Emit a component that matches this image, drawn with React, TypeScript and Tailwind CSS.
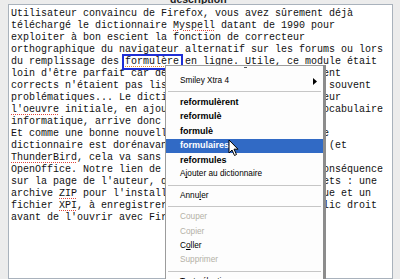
import React from "react";

type Seg = string | { t: string; err?: "red" | "orange" };

const lines: Seg[][] = [
  ["Utilisateur convaincu de Firefox, vous avez sûrement déjà"],
  ["téléchargé le dictionnaire ", { t: "Myspell", err: "red" }, " datant de 1990 pour"],
  ["exploiter à bon escient la fonction de correcteur"],
  ["orthographique du navigateur alternatif sur les forums ou lors"],
  ["du remplissage des ", { t: "formulère", err: "orange" }, " en ligne. Utile, ce module était"],
  ["loin d'être parfait car de nombreux termes parfaitement"],
  ["corrects n'étaient pas listés, rendant ses résultats souvent"],
  ["problématiques... Le dictionnaire, repensé par l'auteur"],
  [{ t: "l'oeuvre", err: "red" }, " initiale, en ajoutant des termes issus du vocabulaire"],
  ["informatique, arrive donc à point nommé."],
  ["Et comme une bonne nouvelle n'arrive jamais seule, ce"],
  ["dictionnaire est dorénavant compatible avec Netscape (et"],
  [{ t: "ThunderBird", err: "red" }, ", cela va sans dire, ainsi qu'avec"],
  ["OpenOffice. Notre lien de téléchargement pointe en conséquence"],
  ["sur la page de l'auteur, qui propose ainsi deux paquets : une"],
  ["archive ", { t: "ZIP", err: "red" }, " pour l'installation de manière automatique et un"],
  ["fichier ", { t: "XPI", err: "red" }, ", à enregistrer sur votre disque via un clic droit"],
  ["avant de l'ouvrir avec Firefox."],
];

function Line({ segs }: { segs: Seg[] }) {
  return (
    <div className="h-[12px] whitespace-pre">
      {segs.map((s, i) =>
        typeof s === "string" ? (
          <span key={i}>{s}</span>
        ) : (
          <span
            key={i}
            className={
              s.err === "orange"
                ? "underline decoration-dotted decoration-1 decoration-[#e8872a] underline-offset-[2px]"
                : "underline decoration-dotted decoration-1 decoration-[#e0463c] underline-offset-[2px]"
            }
          >
            {s.t}
          </span>
        )
      )}
    </div>
  );
}

function Sep() {
  return (
    <div className="flex h-[7px] items-center px-[2px]">
      <div className="h-px w-full bg-[#c6c6c6]" />
    </div>
  );
}

function Item({
  children,
  bold,
  disabled,
  active,
}: {
  children: React.ReactNode;
  bold?: boolean;
  disabled?: boolean;
  active?: boolean;
}) {
  return (
    <div
      className={`flex h-[14.4px] items-center pl-[14px] leading-none ${
        bold ? "text-[9px] font-bold" : "text-[8.25px]"
      } ${active ? "bg-[#316ac5] text-white" : disabled ? "text-[#b4b1a6]" : "text-black"}`}
    >
      {children}
    </div>
  );
}

export default function App() {
  return (
    <div className="relative flex h-[279px] w-[400px] flex-col overflow-hidden bg-[#ececec] font-['Liberation_Sans',sans-serif]">
      <div className="flex h-[4px] items-end overflow-hidden pl-[170px]">
        <span className="shrink-0 text-[10.5px] font-bold leading-[10px] text-[#222]">description</span>
      </div>

      <div className="flex flex-1 pl-[8px] pr-[7px]">
        <div className="flex-1 border border-[#a9b2bc] bg-white pl-[2px] pt-[3px] font-['Liberation_Mono',monospace] text-[10px] leading-[12px] text-[#111]">
          {lines.map((l, i) => (
            <Line key={i} segs={l} />
          ))}
        </div>
      </div>

      {/* word selection box */}
      <div className="absolute left-[122px] top-[54px] h-[16px] w-[61px] border-2 border-[#1f2fd6]" />

      {/* context menu */}
      <div className="absolute left-[165px] top-[65px] h-[230px] w-[158px] border-l border-t border-[#9c9c9c] bg-[#fdfdfd] shadow-[3px_0_0_0_#8c8c8c]">
        <div className="relative h-[8px]">
          <div className="absolute left-[78px] top-[1px] h-[1px] w-[3px] bg-[#555]" />
        </div>
        <div className="flex h-[14.4px] items-center justify-between pl-[14px] pr-[6px] text-[8.25px] leading-none text-black">
          <span>Smiley Xtra 4</span>
          <svg width="4" height="7" viewBox="0 0 4 7">
            <path d="M0 0 L4 3.5 L0 7 Z" fill="#000" />
          </svg>
        </div>
        <Sep />
        <Item bold>reformulèrent</Item>
        <Item bold>reformulè</Item>
        <Item bold>formulè</Item>
        <Item bold active>formulaires</Item>
        <Item bold>reformules</Item>
        <Item>
          <span>
            A<span className="underline">j</span>outer au dictionnaire
          </span>
        </Item>
        <Sep />
        <Item>
          <span>
            Annu<span className="underline">l</span>er
          </span>
        </Item>
        <Sep />
        <Item disabled>Couper</Item>
        <Item disabled>Copier</Item>
        <Item>
          <span>
            C<span className="underline">o</span>ller
          </span>
        </Item>
        <Item disabled>Supprimer</Item>
        <Sep />
        <Item>Tout sélectionner</Item>
      </div>

      {/* mouse pointer */}
      <svg
        className="absolute left-[228px] top-[139px]"
        width="11"
        height="18"
        viewBox="0 0 11 18"
      >
        <path
          d="M1 1 L1 14 L4 11 L6.5 16.5 L8.5 15.5 L6 10.2 L10 10.2 Z"
          fill="#fff"
          stroke="#000"
          strokeWidth="1"
          strokeLinejoin="round"
        />
      </svg>
    </div>
  );
}
